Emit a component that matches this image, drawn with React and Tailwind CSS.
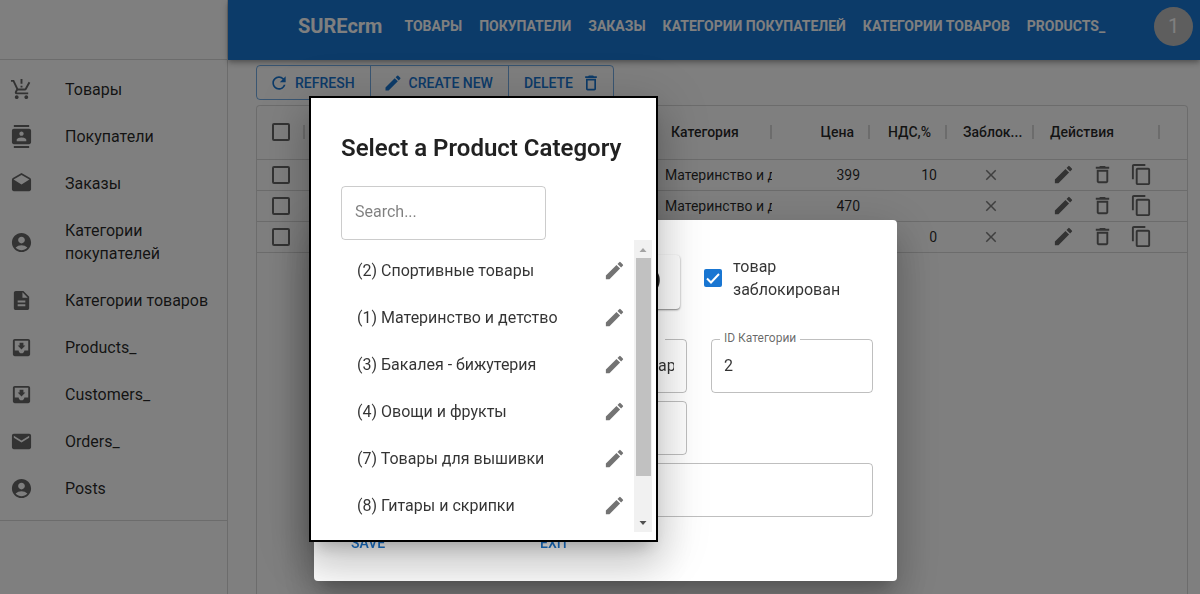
import React from 'react';
import {
  MdAccountCircle,
  MdClose,
  MdContentCopy,
  MdDeleteOutline,
  MdDescription,
  MdDrafts,
  MdEdit,
  MdMail,
  MdMoveToInbox,
  MdRefresh,
} from 'react-icons/md';

function CartAlertIcon({ className }) {
  return (
    <svg viewBox="0 0 24 24" className={className} fill="currentColor" aria-hidden="true">
      <path d="M13 10h-2V8h2v2zm0-4h-2V1h2v5zM7 18c-1.100 0-1.990.9-1.990 2S5.900 22 7 22s2-.9 2-2-.9-2-2-2zm10 0c-1.100 0-1.990.9-1.990 2s.89 2 1.990 2 2-.9 2-2-.9-2-2-2zm-8.900-5h7.450c.75 0 1.410-.41 1.750-1.030L21.160 4.960 19.420 4l-3.870 7H8.530L4.270 2H1v2h2l3.600 7.590-1.350 2.440C4.520 15.370 5.480 17 7 17h12v-2H7l1.100-2z" />
    </svg>
  );
}

function ContactsIcon({ className }) {
  return (
    <svg viewBox="0 0 24 24" className={className} fill="currentColor" aria-hidden="true">
      <path d="M20 0H4v2h16V0zM4 24h16v-2H4v2zM20 4H4c-1.100 0-2 .9-2 2v12c0 1.100.9 2 2 2h16c1.100 0 2-.9 2-2V6c0-1.100-.9-2-2-2zm-8 2.750c1.240 0 2.250 1.010 2.250 2.250s-1.010 2.250-2.250 2.250S9.750 10.240 9.750 9 10.760 6.750 12 6.750zM17 17H7v-1.500c0-1.670 3.330-2.500 5-2.500s5 .83 5 2.500V17z" />
    </svg>
  );
}

const sections = [
  { label: 'Товары', Icon: CartAlertIcon },
  { label: 'Покупатели', Icon: ContactsIcon },
  { label: 'Заказы', Icon: MdDrafts },
  { label: 'Категории покупателей', Icon: MdAccountCircle },
  { label: 'Категории товаров', Icon: MdDescription },
  { label: 'Products_', Icon: MdMoveToInbox },
  { label: 'Customers_', Icon: MdMoveToInbox },
  { label: 'Orders_', Icon: MdMail },
  { label: 'Posts', Icon: MdAccountCircle },
];

const topLinks = ['ТОВАРЫ', 'ПОКУПАТЕЛИ', 'ЗАКАЗЫ', 'КАТЕГОРИИ ПОКУПАТЕЛЕЙ', 'КАТЕГОРИИ ТОВАРОВ', 'PRODUCTS_'];

const rows = [
  { id: 1, category: 'Материнство и детство', price: '399', vat: '10' },
  { id: 2, category: 'Материнство и детство', price: '470', vat: '' },
  { id: 3, category: '', price: '', vat: '0' },
];

const categories = [
  '(2) Спортивные товары',
  '(1) Материнство и детство',
  '(3) Бакалея - бижутерия',
  '(4) Овощи и фрукты',
  '(7) Товары для вышивки',
  '(8) Гитары и скрипки',
];

function Sidebar() {
  return (
    <aside className="flex w-[228px] shrink-0 flex-col border-r border-black/15">
      <div className="h-[60px] border-b border-black/15" />
      <nav className="border-b border-black/15 pt-[6px] pb-2">
        {sections.map(({ label, Icon }) => (
          <a key={label} href="#" className="flex items-center gap-8 py-3 pr-4 pl-[10px] text-base/[23px] text-black/85">
            <Icon className="size-[23px] shrink-0 text-black/60" />
            {label}
          </a>
        ))}
      </nav>
    </aside>
  );
}

function TopBar() {
  return (
    <header className="flex h-[60px] items-center bg-[#1976d2] pr-[7px] pb-2 pl-[70px] text-white shadow-[0_2px_4px_-1px_rgba(0,0,0,0.2),0_4px_5px_rgba(0,0,0,0.14),0_1px_10px_rgba(0,0,0,0.12)]">
      <span className="text-xl font-bold">SUREcrm</span>
      <nav className="ml-[22px] flex flex-1 gap-[17px] text-sm font-bold whitespace-nowrap">
        {topLinks.map((label) => (
          <a key={label} href="#">
            {label}
          </a>
        ))}
      </nav>
      <button type="button" className="flex size-[39px] items-center justify-center rounded-full bg-[#bdbdbd] text-xl">
        1
      </button>
    </header>
  );
}

function Toolbar() {
  return (
    <div className="flex w-fit divide-x divide-[#1976d2]/60 rounded border border-[#1976d2]/60 text-sm font-medium text-[#1976d2]">
      <button type="button" className="flex h-[33px] items-center gap-[6px] pr-[15px] pl-3">
        <MdRefresh className="size-5" />
        REFRESH
      </button>
      <button type="button" className="flex h-[33px] items-center gap-[6px] pr-[15px] pl-3">
        <MdEdit className="size-5" />
        CREATE NEW
      </button>
      <button type="button" className="flex h-[33px] items-center gap-2 pr-3 pl-[15px]">
        DELETE
        <MdDeleteOutline className="size-5" />
      </button>
    </div>
  );
}

function RowCheckbox({ label }) {
  return (
    <input
      type="checkbox"
      aria-label={label}
      className="block size-[18px] appearance-none rounded-[2px] border-2 border-black/60"
    />
  );
}

function HeadCell({ children, className = '' }) {
  return (
    <th scope="col" className="p-0 font-medium">
      <div className={`flex h-[14px] items-center border-r-2 border-black/15 ${className}`}>{children}</div>
    </th>
  );
}

function ProductTable() {
  return (
    <div className="mt-[5px] flex-1 rounded-t border border-b-0 border-black/15">
      <table className="w-full table-fixed border-collapse text-sm text-black/85">
        <colgroup>
          <col className="w-12" />
          <col />
          <col className="w-[117px]" />
          <col className="w-[98px]" />
          <col className="w-[77px]" />
          <col className="w-[87px]" />
          <col className="w-[126px]" />
          <col className="w-[27px]" />
        </colgroup>
        <thead>
          <tr className="h-[53px] border-b border-black/15">
            <HeadCell className="pl-[15px]">
              <RowCheckbox label="*" />
            </HeadCell>
            <th className="p-0" />
            <HeadCell className="pl-4">Категория</HeadCell>
            <HeadCell className="justify-end pr-[14px]">Цена</HeadCell>
            <HeadCell className="justify-end pr-[14px]">НДС,%</HeadCell>
            <HeadCell className="pl-4">Заблок...</HeadCell>
            <HeadCell className="pl-4">Действия</HeadCell>
            <th className="p-0" />
          </tr>
        </thead>
        <tbody>
          {rows.map((row) => (
            <tr key={row.id} className="h-[31px] border-b border-black/15">
              <td className="p-0 pl-[15px]">
                <RowCheckbox label={String(row.id)} />
              </td>
              <td className="p-0" />
              <td className="p-0 pl-[10px]">
                <div className="overflow-hidden whitespace-nowrap">{row.category}</div>
              </td>
              <td className="p-0 pr-[10px] text-right">{row.price}</td>
              <td className="p-0 pr-[10px] text-right">{row.vat}</td>
              <td className="p-0">
                <MdClose className="mx-auto size-[18px] text-black/50" />
              </td>
              <td className="p-0 pl-[18px]">
                <div className="flex gap-4 text-black/60">
                  <button type="button" aria-label="edit">
                    <MdEdit className="size-[23px]" />
                  </button>
                  <button type="button" aria-label="delete">
                    <MdDeleteOutline className="size-[23px]" />
                  </button>
                  <button type="button" aria-label="copy">
                    <MdContentCopy className="size-[23px]" />
                  </button>
                </div>
              </td>
              <td className="p-0" />
            </tr>
          ))}
        </tbody>
      </table>
    </div>
  );
}

function OutlinedField({ name, label, value, notch, inset, wide }) {
  return (
    <div className={`relative flex h-[54px] rounded border border-black/25 ${wide ? 'col-span-2' : ''}`}>
      {label ? (
        <label htmlFor={name} className="absolute -top-[10px] left-2 bg-white px-1 text-xs/[16px] text-black/60">
          {label}
        </label>
      ) : null}
      {notch ? <span className="absolute -top-px right-[21px] h-px w-[150px] bg-white" /> : null}
      <input
        id={name}
        name={name}
        aria-label={label ? undefined : name}
        defaultValue={value}
        className={`my-auto mr-3 w-full min-w-0 bg-transparent text-base text-black/80 outline-none ${inset ? 'ml-[196px]' : 'ml-3'}`}
      />
    </div>
  );
}

function ProductDialog() {
  return (
    <section
      role="dialog"
      className="absolute top-[220px] left-[314px] flex w-[583px] flex-col rounded bg-white px-6 pt-[35px] pb-[26px] shadow-[0_11px_15px_-7px_rgba(0,0,0,0.2),0_24px_38px_3px_rgba(0,0,0,0.14),0_9px_46px_8px_rgba(0,0,0,0.12)]"
    >
      <div className="flex items-start">
        <div className="flex h-[54px] w-[342px] items-center justify-end rounded pr-[19px] pb-[6px] text-xl font-medium text-black/85 shadow-[0_1px_2px_rgba(0,0,0,0.5)]">
          )
        </div>
        <label className="ml-6 flex items-center gap-[11px] text-base/[23px] text-black/80">
          <span className="grid">
            <input
              type="checkbox"
              defaultChecked
              className="col-start-1 row-start-1 size-[18px] appearance-none rounded-[2px] bg-[#1976d2]"
            />
            <svg viewBox="0 0 18 18" className="pointer-events-none col-start-1 row-start-1 size-[18px]" aria-hidden="true">
              <path d="M3 9.500l4 4 8-8.500" fill="none" stroke="white" strokeWidth="2" />
            </svg>
          </span>
          <span className="w-[120px]">товар заблокирован</span>
        </label>
      </div>
      <div className="mt-[30px] grid grid-cols-[349px_1fr] gap-x-6 gap-y-2">
        <OutlinedField name="category" value="Спортивные товары" notch inset />
        <OutlinedField name="category-id" label="ID Категории" value="2" />
        <OutlinedField name="price" />
        <span />
        <OutlinedField name="comment" wide />
      </div>
      <div className="mt-[14px] flex text-sm font-medium text-[#1976d2]">
        <button type="button" className="h-6 w-[190px] px-[13px] text-left">
          SAVE
        </button>
        <button type="button" className="h-6 px-3">
          EXIT
        </button>
      </div>
    </section>
  );
}

function CategoryDialog() {
  return (
    <section
      role="dialog"
      aria-labelledby="category-title"
      className="absolute top-[96px] left-[309px] w-[349px] border-2 border-black bg-white pr-1 pb-2 pl-[30px] shadow-[0_11px_15px_-7px_rgba(0,0,0,0.2),0_24px_38px_3px_rgba(0,0,0,0.14),0_9px_46px_8px_rgba(0,0,0,0.12)]"
    >
      <h2 id="category-title" className="pt-[34px] text-2xl/[32px] font-semibold text-black/87">
        Select a Product Category
      </h2>
      <input
        type="text"
        aria-label="Search..."
        placeholder="Search..."
        className="mt-[22px] block h-[54px] w-[205px] rounded border border-black/20 px-[13px] pb-1 text-base outline-none placeholder:text-black/50"
      />
      <div className="flex">
        <ul className="flex-1 pt-[7px] pb-[3px]">
          {categories.map((name) => (
            <li key={name} className="flex items-center justify-between py-3 pr-2 pl-4 text-base/[23px] text-black/80">
              {name}
              <button type="button" aria-label="edit" className="text-black/55">
                <MdEdit className="size-[23px]" />
              </button>
            </li>
          ))}
        </ul>
        <div className="flex w-[18px] flex-col items-center bg-[#f1f1f1]">
          <svg viewBox="0 0 18 18" className="size-[18px] text-[#a3a3a3]" fill="currentColor" aria-hidden="true">
            <path d="M5.500 12h7L9 8z" />
          </svg>
          <div className="h-[218px] w-[15px] bg-[#c1c1c1]" />
          <svg viewBox="0 0 18 18" className="mt-auto size-[18px] text-[#505050]" fill="currentColor" aria-hidden="true">
            <path d="M5.500 7h7L9 11z" />
          </svg>
        </div>
      </div>
    </section>
  );
}

export default function App() {
  return (
    <div className="relative flex h-screen overflow-hidden bg-white font-[Roboto,sans-serif]">
      <Sidebar />
      <div className="flex min-w-0 flex-1 flex-col">
        <TopBar />
        <main className="flex flex-1 flex-col pt-[5px] pr-3 pl-7">
          <Toolbar />
          <ProductTable />
        </main>
      </div>
      <div className="fixed inset-0 bg-black/50">
        <ProductDialog />
        <CategoryDialog />
      </div>
    </div>
  );
}
